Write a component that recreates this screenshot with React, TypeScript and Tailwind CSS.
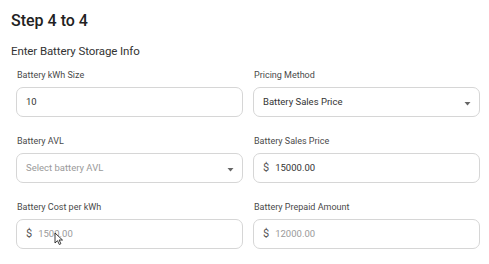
import React from 'react';

type Field = {
  label: string;
  value?: string;
  placeholder?: string;
  prefix?: boolean;
  select?: boolean;
  cursor?: boolean;
};

const fields: Field[] = [
  { label: 'Battery kWh Size', value: '10' },
  { label: 'Pricing Method', value: 'Battery Sales Price', select: true },
  { label: 'Battery AVL', placeholder: 'Select battery AVL', select: true },
  { label: 'Battery Sales Price', value: '15000.00', prefix: true },
  { label: 'Battery Cost per kWh', placeholder: '1500.00', prefix: true, cursor: true },
  { label: 'Battery Prepaid Amount', placeholder: '12000.00', prefix: true },
];

function Caret() {
  return (
    <svg className="w-[7px] h-[5px] text-[#666]" viewBox="0 0 7 5" fill="currentColor">
      <path d="M0.5 1h6L3.5 4.5z" />
    </svg>
  );
}

function MouseArrow() {
  return (
    <svg className="absolute left-[37px] top-[12px] w-[9px] h-[13px]" viewBox="0 0 9 13">
      <path d="M1 1v10l2.5-2.3 1.8 3.8 1.6-.8-1.8-3.7H8.5z" fill="#fff" stroke="#222" strokeWidth="0.9" strokeLinejoin="round" />
    </svg>
  );
}

function FormField({ field }: { field: Field }) {
  return (
    <div className="flex flex-col">
      <label className="text-[9px] leading-[12px] text-[#4a4a4a] mb-[6px] pl-[1px]">{field.label}</label>
      <div className="relative h-[30px] rounded-[7px] border border-[#d6d6d6] bg-white flex items-center pl-[9px] pr-[8px] text-[9.5px]">
        {field.prefix && <span className="text-[11px] text-[#555] mr-[6px]">$</span>}
        <span className={`flex-1 ${field.value ? 'text-[#333]' : 'text-[#9a9a9a]'}`}>
          {field.value ?? field.placeholder}
        </span>
        {field.select && <span className="mt-[2px]"><Caret /></span>}
        {field.cursor && <MouseArrow />}
      </div>
    </div>
  );
}

export default function App() {
  return (
    <div className="w-[489px] h-[264px] bg-white font-['Roboto',sans-serif] text-[#333] pt-[11px] overflow-hidden">
      <h1 className="pl-[11px] text-[16px] font-medium leading-[20px] text-[#222]">Step 4 to 4</h1>
      <p className="pl-[11px] mt-[12px] text-[11.5px] tracking-[-0.1px] leading-[16px] text-[#333]">Enter Battery Storage Info</p>
      <div className="grid grid-cols-2 gap-x-[10px] gap-y-[18px] pl-[16px] pr-[9px] mt-[10px]">
        {fields.map((f) => (
          <FormField key={f.label} field={f} />
        ))}
      </div>
    </div>
  );
}
